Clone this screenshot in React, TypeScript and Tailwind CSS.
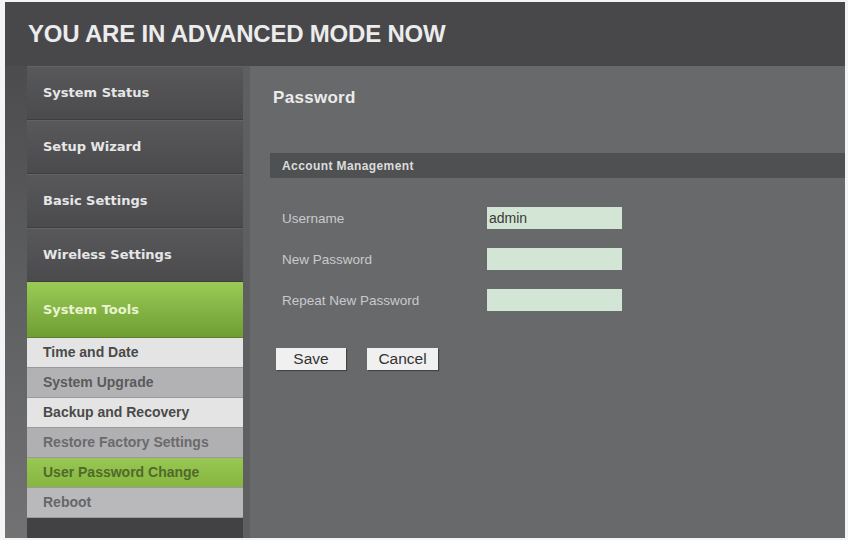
import React from "react";

const top = [
  "System Status",
  "Setup Wizard",
  "Basic Settings",
  "Wireless Settings",
];

const subs: { label: string; cls: string }[] = [
  { label: "Time and Date", cls: "bg-[#e4e4e4] text-[#4a4a4a]" },
  { label: "System Upgrade", cls: "bg-[#b2b2b4] text-[#5a5a5c]" },
  { label: "Backup and Recovery", cls: "bg-[#e4e4e4] text-[#4a4a4a]" },
  { label: "Restore Factory Settings", cls: "bg-[#b0b0b2] text-[#6a6a6c]" },
  { label: "User Password Change", cls: "bg-gradient-to-b from-[#98c853] to-[#86b540] text-[#4f6a2a]" },
  { label: "Reboot", cls: "bg-[#b9b9bb] text-[#66666a]" },
];

export default function App() {
  const font = { fontFamily: '"Liberation Sans", Arial, sans-serif' };
  const dv = { fontFamily: '"DejaVu Sans", Verdana, sans-serif' };
  return (
    <div className="w-[848px] h-[540px] bg-[#f4f4f4] pt-[2px] pl-[5px] pr-[3px] pb-[2px]" style={font}>
      <div className="w-full h-full bg-[#48484b] flex flex-col overflow-hidden">
        <div className="h-[64px] shrink-0 flex items-center pl-[23px]">
          <h1 className="text-[24px] font-bold text-[#ececec] tracking-[-0.2px]">YOU ARE IN ADVANCED MODE NOW</h1>
        </div>
        <div className="flex flex-1 min-h-0">
          <div className="w-[22px] shrink-0 bg-gradient-to-b from-[#4c4c4f] via-[#5f6062] to-[#727274]" />
          <div className="w-[216px] shrink-0 flex flex-col bg-[#434345]">
            {top.map((t) => (
              <div
                key={t}
                className="h-[54px] shrink-0 flex items-center pl-[16px] bg-gradient-to-b from-[#58585b] to-[#4b4b4e] border-t border-[#636366] border-b border-b-[#3e3e40]"
              >
                <span className="text-[13px] font-bold text-[#e6e6e6]" style={dv}>{t}</span>
              </div>
            ))}
            <div className="h-[56px] shrink-0 flex items-center pl-[16px] bg-gradient-to-b from-[#9acb56] to-[#6f9d33] border-b border-[#5d7f2e]">
              <span className="text-[13px] font-bold text-[#e8f5d0]" style={dv}>System Tools</span>
            </div>
            {subs.map((s) => (
              <div key={s.label} className={`h-[30px] shrink-0 flex items-center pl-[16px] border-b border-[#9a9a9c] ${s.cls}`}>
                <span className="text-[14px] font-bold">{s.label}</span>
              </div>
            ))}
            <div className="flex-1 bg-[#424244]" />
          </div>
          <div className="w-[7px] shrink-0 bg-[#5e5f61]" />
          <div className="flex-1 bg-[#68696b] flex flex-col pt-[22px]">
            <div className="pl-[23px] h-[20px] flex items-center">
              <h2 className="text-[17px] font-bold text-[#ebebeb] tracking-[0.3px]">Password</h2>
            </div>
            <div className="mt-[45px] ml-[20px] h-[25px] bg-[#4f5052] flex items-center pl-[12px]">
              <span className="text-[12px] font-bold text-[#dcdcdc] tracking-[0.4px]">Account Management</span>
            </div>
            <div className="mt-[29px] ml-[32px] flex flex-col gap-[19px]">
              {[
                ["Username", "admin"],
                ["New Password", ""],
                ["Repeat New Password", ""],
              ].map(([l, v]) => (
                <div key={l} className="flex items-center h-[22px]">
                  <span className="w-[205px] text-[13.5px] text-[#c9cacb] pt-[3px]">{l}</span>
                  <div className="w-[135px] h-[22px] bg-[#d3e5d4] flex items-center pl-[2px]">
                    <span className="text-[14px] text-[#3a3a3a]">{v}</span>
                  </div>
                </div>
              ))}
            </div>
            <div className="mt-[37px] ml-[26px] flex gap-[21px]">
              <button className="w-[70px] h-[22px] bg-[#f0f0f0] text-[15.5px] leading-none text-[#333] shadow-[1px_1px_1px_rgba(0,0,0,0.35)]">Save</button>
              <button className="w-[71px] h-[22px] bg-[#f0f0f0] text-[15.5px] leading-none text-[#333] shadow-[1px_1px_1px_rgba(0,0,0,0.35)]">Cancel</button>
            </div>
          </div>
        </div>
      </div>
    </div>
  );
}
